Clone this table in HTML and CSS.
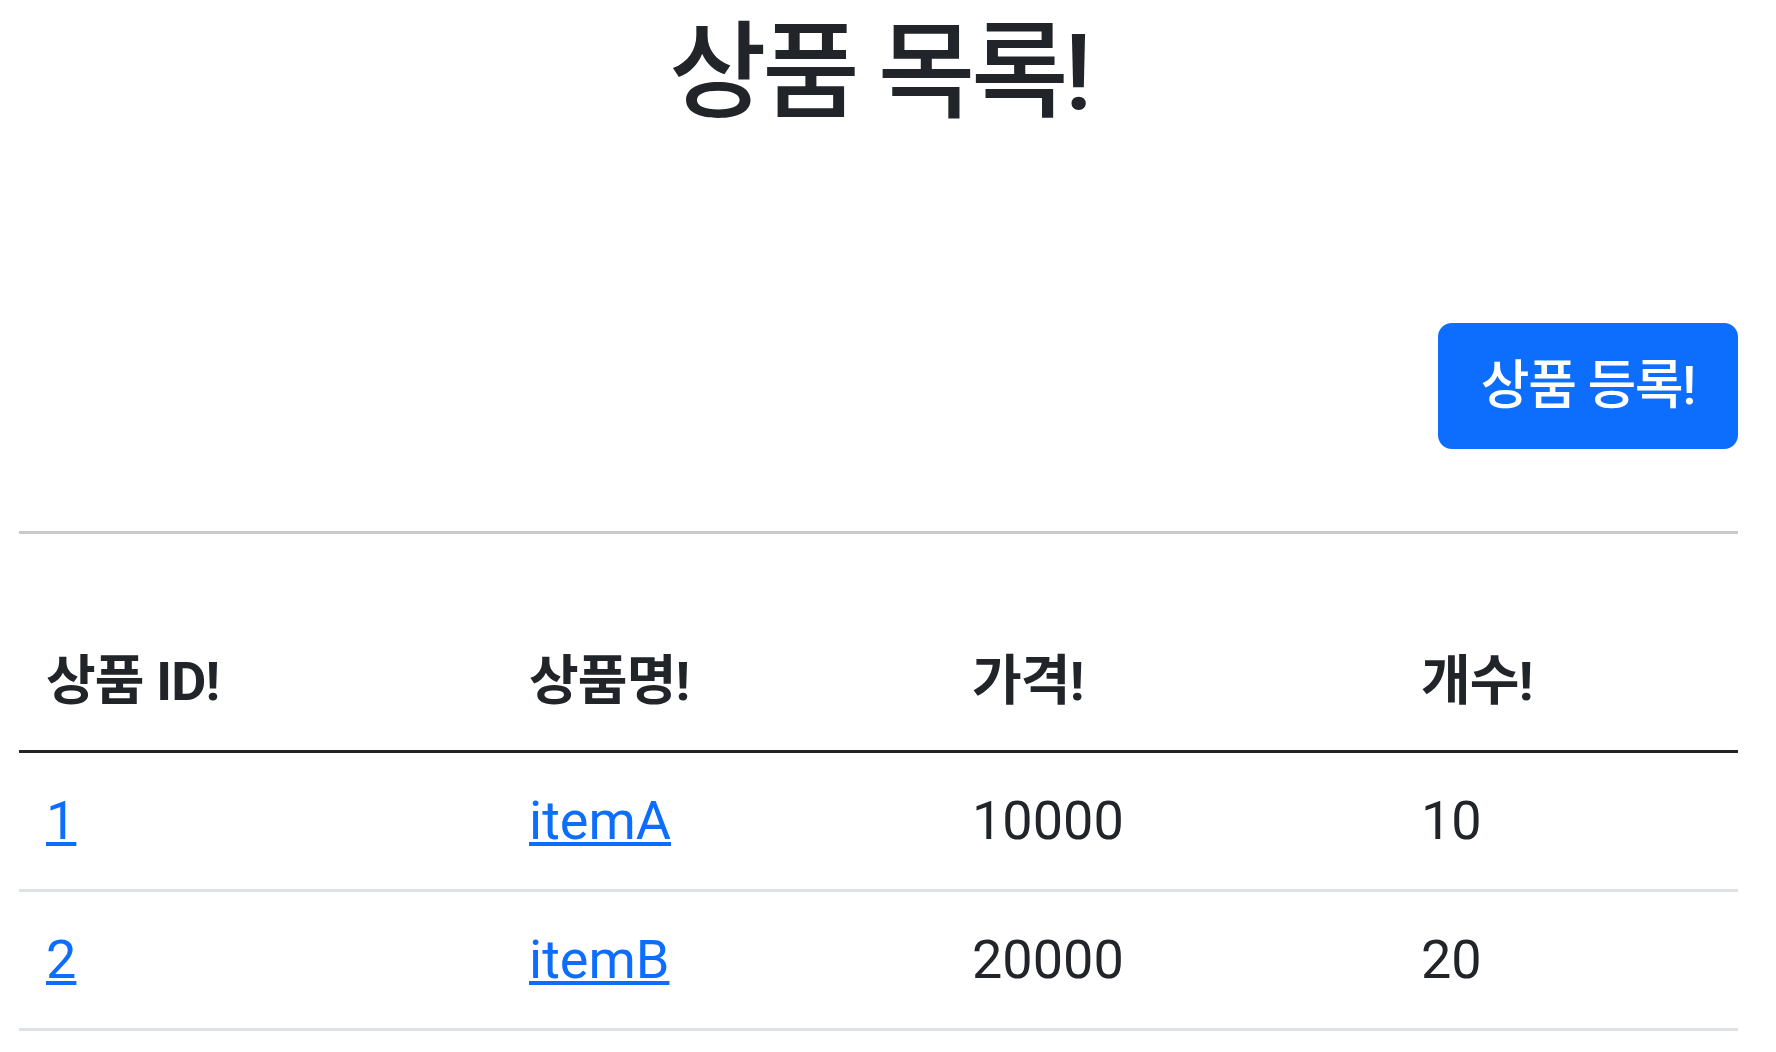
FILE: index.html
```html
<!DOCTYPE html>
<html lang="ko">
<head>
<meta charset="utf-8">
<title>상품 목록</title>
<link rel="stylesheet" href="styles.css">
</head>
<body>
<div class="container">
  <div class="page-header">
    <h2 class="page-title">상품 목록!</h2>
  </div>
  <div class="actions">
    <button class="btn-primary" type="button">상품 등록!</button>
  </div>
  <hr class="divider">
  <table class="items">
    <thead>
      <tr>
        <th class="col-id">상품 ID!</th>
        <th class="col-name">상품명!</th>
        <th class="col-price">가격!</th>
        <th class="col-qty">개수!</th>
      </tr>
    </thead>
    <tbody>
      <tr>
        <td><a href="#" class="link">1</a></td>
        <td><a href="#" class="link">itemA</a></td>
        <td>10000</td>
        <td>10</td>
      </tr>
      <tr>
        <td><a href="#" class="link">2</a></td>
        <td><a href="#" class="link">itemB</a></td>
        <td>20000</td>
        <td>20</td>
      </tr>
    </tbody>
  </table>
</div>
</body>
</html>
```

FILE: styles.css
```css
html, body {
  margin: 0;
  padding: 0;
  background: #ffffff;
}

body {
  font-family: Roboto, "Noto Sans CJK KR", sans-serif;
  color: #212529;
  font-size: 54px;
}

.container {
  padding: 0 38px 0 19px;
}

.page-header {
  padding: 10px 0 159px;
  text-align: center;
}

.page-title {
  margin: 0 0 27px;
  font-size: 106px;
  line-height: 127px;
  font-weight: 500;
  letter-spacing: -0.04em;
}

.actions {
  display: flex;
  justify-content: flex-end;
}

.btn-primary {
  font-family: Roboto, "Noto Sans CJK KR", sans-serif;
  font-size: 53px;
  line-height: 80px;
  padding: 20px 40px;
  border: 3px solid #0d6efd;
  border-radius: 14px;
  background: #0d6efd;
  color: #ffffff;
  font-weight: 500;
  letter-spacing: -0.025em;
}

.divider {
  margin: 82px 0 80px;
  border: 0;
  border-top: 3px solid #c8c9ca;
  height: 0;
}

.items {
  width: 100%;
  border-collapse: collapse;
  table-layout: fixed;
}

.items th,
.items td {
  padding: 28px 27px;
  line-height: 80px;
  text-align: left;
  vertical-align: top;
}

.items th {
  font-weight: 700;
  letter-spacing: -0.015em;
  border-bottom: 3px solid #212529;
}

.items td {
  border-bottom: 3px solid #dee2e6;
}

.col-id { width: 429px; }
.col-name { width: 389px; }
.col-price { width: 395px; }
.col-qty { width: auto; }

.link {
  color: #0d6efd;
  text-decoration: underline;
  text-decoration-thickness: 4px;
  text-underline-offset: 3px;
}
```
